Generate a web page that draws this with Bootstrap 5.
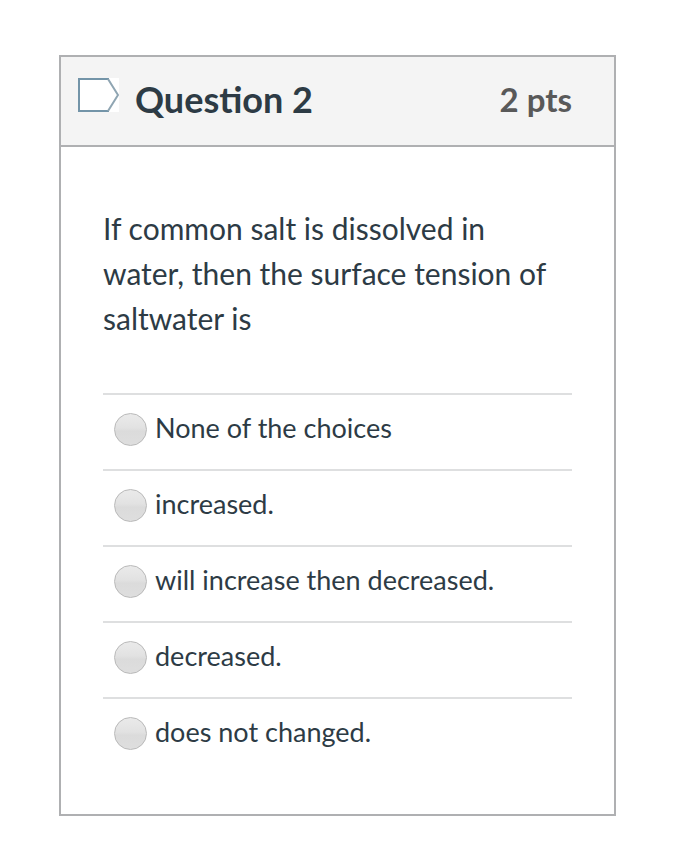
<!DOCTYPE html>
<html lang="en">
<head>
<meta charset="utf-8">
<meta name="viewport" content="width=device-width, initial-scale=1">
<title>Question 2</title>
<link href="https://cdn.jsdelivr.net/npm/bootstrap@5.3.0/dist/css/bootstrap.min.css" rel="stylesheet">
<style>
body { font-family: Lato, sans-serif; color: #2d3b45; background: #fff; }
.quiz-page { padding: 55px 59px 28px 59px; }
.question { border: 2px solid #afb0b2; }
.question-head { background: #f4f4f4; border-bottom: 2px solid #afb0b2; padding: 20px 42px 24px 16px; }
.question-title { font-size: 36px; line-height: 44px; font-weight: 700; }
.question-pts { font-size: 33px; line-height: 44px; font-weight: 700; color: #595959; }
.flag-btn { line-height: 0; }
.question-body { padding: 59px 42px 41px; }
.question-text { font-size: 30px; line-height: 45px; margin-bottom: 52px; }
.answer { border-top: 2px solid #dedfe0; padding: 13px 0 22px 11px; font-size: 27px; line-height: 39px; }
.answer-radio { appearance: none; width: 33px; height: 33px; margin: 5px 0 0; border: 1px solid #b9b9b9; border-radius: 50%; background: linear-gradient(#eaeaea 0%, #e2e2e2 45%, #dbdbdb 55%, #dedede 100%); }
.answer-radio:checked { background: radial-gradient(#2d3b45 30%, #dcdcdc 34%); }
</style>
<script src="https://cdn.jsdelivr.net/npm/bootstrap@5.3.0/dist/js/bootstrap.bundle.min.js" defer></script>
</head>
<body>
<main class="quiz-page">
  <form class="question">
    <header class="question-head d-flex align-items-start justify-content-between">
      <div class="d-flex align-items-start gap-3">
        <button type="button" class="flag-btn border-0 bg-transparent p-0" aria-label="Flag question">
          <svg width="42" height="36" viewBox="0 0 42 36"><path d="M1 1H42V35H1Z" fill="#fff"/><path d="M32 2H2V34H32" fill="none" stroke="#7394a8" stroke-width="2"/><path d="M31 2L41 18L31 34" fill="none" stroke="#8fa5b2" stroke-width="2"/></svg>
        </button>
        <h1 class="question-title mb-0">Question 2</h1>
      </div>
      <div class="question-pts">2 pts</div>
    </header>
    <fieldset class="question-body">
      <legend class="question-text">If common salt is dissolved in water, then the surface tension of saltwater is</legend>
      <label class="answer d-flex align-items-start gap-2"><input class="answer-radio flex-shrink-0" type="radio" name="answer"><span>None of the choices</span></label>
      <label class="answer d-flex align-items-start gap-2"><input class="answer-radio flex-shrink-0" type="radio" name="answer"><span>increased.</span></label>
      <label class="answer d-flex align-items-start gap-2"><input class="answer-radio flex-shrink-0" type="radio" name="answer"><span>will increase then decreased.</span></label>
      <label class="answer d-flex align-items-start gap-2"><input class="answer-radio flex-shrink-0" type="radio" name="answer"><span>decreased.</span></label>
      <label class="answer d-flex align-items-start gap-2"><input class="answer-radio flex-shrink-0" type="radio" name="answer"><span>does not changed.</span></label>
    </fieldset>
  </form>
</main>
</body>
</html>
